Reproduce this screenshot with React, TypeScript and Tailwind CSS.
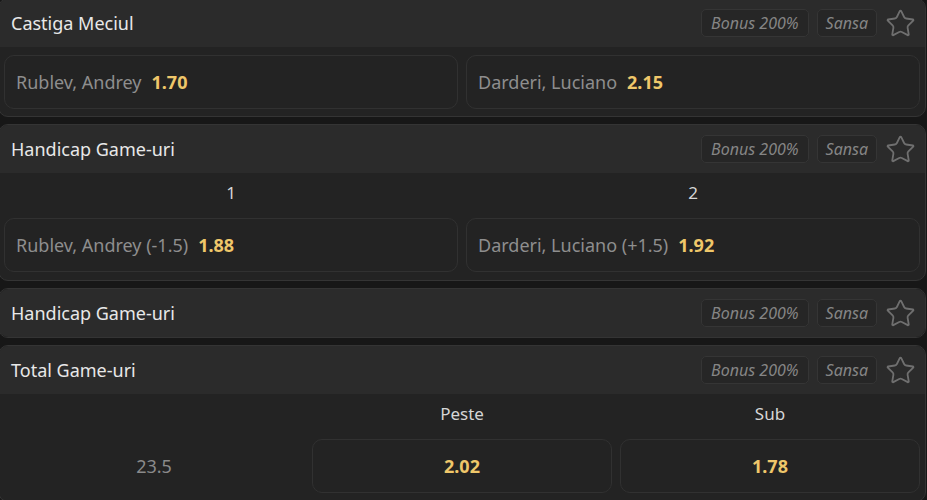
import React from 'react';
import { Star } from 'lucide-react';

type Pick = { name: string; odd: string };

const font = { fontFamily: '"Noto Sans", "Open Sans", sans-serif' };

const MarketHeader: React.FC<{ title: string }> = ({ title }) => (
  <div className="flex h-[48px] items-center justify-between bg-[#2b2b2b] pl-[12px] pr-[9px]">
    <span className="text-[18px] text-[#e8e8e8]">{title}</span>
    <div className="flex items-center gap-[8px]">
      <span className="rounded-[5px] border border-[#353535] bg-[#262626] px-[9px] py-[1px] text-[16px] italic text-[#858585]">
        Bonus 200%
      </span>
      <span className="rounded-[5px] border border-[#353535] bg-[#262626] px-[8px] py-[1px] text-[16px] italic text-[#858585]">
        Sansa
      </span>
      <Star className="h-[31px] w-[31px] text-[#6f6f6f]" strokeWidth={1.4} />
    </div>
  </div>
);

const OddButton: React.FC<{ pick: Pick }> = ({ pick }) => (
  <div className="flex h-[54px] w-full shrink-0 items-center gap-[10px] rounded-[10px] border border-[#313131] px-[11px]">
    <span className="text-[18px] text-[#8e8e8e]">{pick.name}</span>
    <span className="text-[18px] font-bold text-[#efc76a]">{pick.odd}</span>
  </div>
);

const Card: React.FC<{ children: React.ReactNode }> = ({ children }) => (
  <div className="-ml-[2px] w-[928px] shrink-0 overflow-hidden rounded-[10px] border border-[#343434] bg-[#232323]">
    {children}
  </div>
);

const ColLabel: React.FC<{ text: string }> = ({ text }) => (
  <div className="flex h-[45px] items-center justify-center pb-[5px] text-[17px] text-[#d6d6d6]">{text}</div>
);

const App: React.FC = () => {
  return (
    <div className="h-[500px] w-[927px] overflow-hidden bg-[#171717]" style={font}>
      <div className="-mt-[2px] flex flex-col gap-[7px]">
        <Card>
          <MarketHeader title="Castiga Meciul" />
          <div className="flex gap-2 px-[5px] pb-[7px] pt-[8px]">
            <div className="flex-1">
              <OddButton pick={{ name: 'Rublev, Andrey', odd: '1.70' }} />
            </div>
            <div className="flex-1">
              <OddButton pick={{ name: 'Darderi, Luciano', odd: '2.15' }} />
            </div>
          </div>
        </Card>

        <Card>
          <MarketHeader title="Handicap Game-uri" />
          <div className="flex gap-2 px-[5px] pb-[8px]">
            {[
              { label: '1', pick: { name: 'Rublev, Andrey (-1.5)', odd: '1.88' } },
              { label: '2', pick: { name: 'Darderi, Luciano (+1.5)', odd: '1.92' } },
            ].map((col) => (
              <div key={col.label} className="flex-1">
                <ColLabel text={col.label} />
                <OddButton pick={col.pick} />
              </div>
            ))}
          </div>
        </Card>

        <Card>
          <MarketHeader title="Handicap Game-uri" />
        </Card>

        <Card>
          <MarketHeader title="Total Game-uri" />
          <div className="grid grid-cols-3 gap-x-2 px-[5px] pb-[8px]">
            <div className="h-[45px]" />
            <ColLabel text="Peste" />
            <ColLabel text="Sub" />
            <div className="flex h-[54px] items-center justify-center text-[18px] text-[#8a8a8a]">23.5</div>
            <div className="flex h-[54px] items-center justify-center rounded-[10px] border border-[#313131] text-[18px] font-bold text-[#efc76a]">
              2.02
            </div>
            <div className="flex h-[54px] items-center justify-center rounded-[10px] border border-[#313131] text-[18px] font-bold text-[#efc76a]">
              1.78
            </div>
          </div>
        </Card>
      </div>
    </div>
  );
};

export default App;
